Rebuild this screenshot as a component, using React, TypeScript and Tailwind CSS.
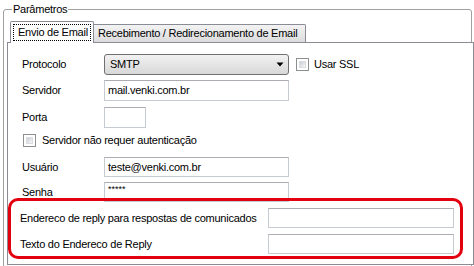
import React from "react";

function CheckBox() {
  return (
    <div className="w-[13px] h-[13px] border border-[#8e8f8f] bg-white p-[2px] shrink-0">
      <div className="w-full h-full bg-gradient-to-br from-[#cbcfd5] to-[#f6f6f6] border border-[#d9dde2]" />
    </div>
  );
}

function TextBox({ w, h = 20, children }: { w: number; h?: number; children?: React.ReactNode }) {
  return (
    <div
      className="border border-[#c6cad1] border-t-[#abadb3] bg-white flex items-center pl-[3px] overflow-hidden whitespace-nowrap"
      style={{ width: w, height: h }}
    >
      {children}
    </div>
  );
}

export default function App() {
  return (
    <div className="w-[474px] h-[266px] bg-white overflow-hidden relative text-[11px] tracking-[-0.25px] text-black font-['Liberation_Sans',Arial,sans-serif] pt-[9px] pl-[3px]">
      {/* Group box */}
      <div className="w-[469px] h-[262px] border border-[#a0a0a0] rounded-[3px] relative pt-[11px]">
        <span className="absolute left-[8px] top-[-8px] bg-white px-[1px] leading-[14px]">Parâmetros</span>

        {/* Tabs */}
        <div className="flex items-start h-[21px] ml-[6px]">
          <div className="relative z-10 w-[84px] h-[22px] border border-b-0 border-[#898c95] bg-white rounded-t-[2px] p-[2px]">
            <div className="w-full h-[17px] border border-dotted border-black flex items-center pl-[4px] whitespace-nowrap">
              Envio de Email
            </div>
          </div>
          <div className="mt-[3px] w-[212px] h-[18px] border border-b-0 border-l-0 border-[#898c95] bg-gradient-to-b from-[#f3f3f3] to-[#dcdcdc] flex items-center pl-[4px] whitespace-nowrap rounded-tr-[2px]">
            Recebimento / Redirecionamento de Email
          </div>
        </div>

        {/* Tab panel */}
        <div className="ml-[3px] w-[467px] h-[223px] border border-[#898c95] bg-white pl-[14px] pt-[11px]">
          {/* Protocolo */}
          <div className="flex items-center h-[21px]">
            <div className="w-[82px]">Protocolo</div>
            <div className="w-[185px] h-[21px] border border-[#707070] rounded-[3px] bg-gradient-to-b from-[#f2f2f2] to-[#d8d8d8] flex items-center justify-between pl-[5px] pr-[4px]">
              <span>SMTP</span>
              <svg width="8" height="5" viewBox="0 0 8 5">
                <polygon points="0.5,0.5 7.5,0.5 4,4.5" fill="#000" />
              </svg>
            </div>
            <div className="ml-[7px]">
              <CheckBox />
            </div>
            <span className="ml-[5px]">Usar SSL</span>
          </div>

          {/* Servidor */}
          <div className="flex items-center h-[21px] mt-[5px]">
            <div className="w-[82px]">Servidor</div>
            <TextBox w={185} h={21}>mail.venki.com.br</TextBox>
          </div>

          {/* Porta */}
          <div className="flex items-center h-[21px] mt-[6px]">
            <div className="w-[82px]">Porta</div>
            <TextBox w={42} h={21} />
          </div>

          {/* checkbox */}
          <div className="flex items-center h-[13px] mt-[6px] ml-[1px]">
            <CheckBox />
            <span className="ml-[6px]">Servidor não requer autenticação</span>
          </div>

          {/* Usuário */}
          <div className="flex items-center h-[20px] mt-[10px]">
            <div className="w-[82px]">Usuário</div>
            <TextBox w={185}>teste@venki.com.br</TextBox>
          </div>

          {/* Senha */}
          <div className="flex items-center h-[20px] mt-[5px]">
            <div className="w-[82px]">Senha</div>
            <TextBox w={185}>
              <span className="text-[9px] leading-none -mt-[6px] tracking-[0px]">*****</span>
            </TextBox>
          </div>

          {/* Reply rows */}
          <div className="flex items-center h-[20px] mt-[6px] -ml-[2px]">
            <div className="w-[248px] whitespace-nowrap">Endereco de reply para respostas de comunicados</div>
            <TextBox w={186} />
          </div>
          <div className="flex items-center h-[20px] mt-[6px] -ml-[2px]">
            <div className="w-[248px] whitespace-nowrap">Texto do Endereco de Reply</div>
            <TextBox w={186} />
          </div>
        </div>
      </div>

      {/* Red highlight annotation */}
      <div className="absolute left-[8px] top-[198px] w-[455px] h-[61px] border-[3px] border-[#e3000f] rounded-[10px] z-20 pointer-events-none" />
    </div>
  );
}
